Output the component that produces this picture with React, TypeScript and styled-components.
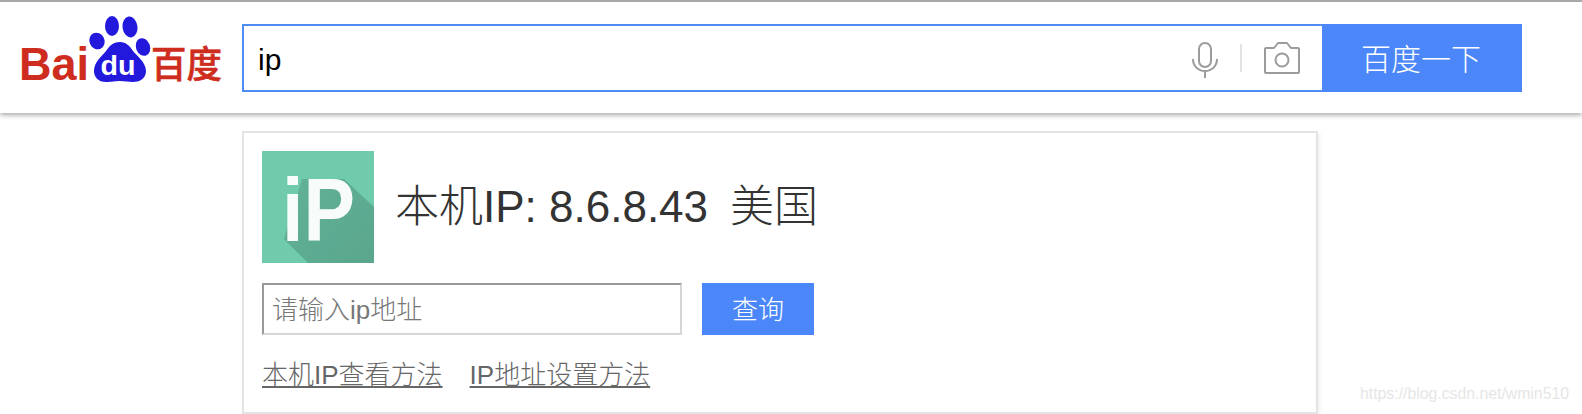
import React from "react";
import styled, { createGlobalStyle } from "styled-components";

const cjk = `"Liberation Sans", "Noto Sans CJK SC", sans-serif`;

const GlobalStyle = createGlobalStyle`
  html, body {
    margin: 0;
    height: 414px;
    overflow: hidden;
    background: #fff;
    font-family: ${cjk};
  }
`;

const Logo = () => (
  <LogoSvg viewBox="20 16 202 68">
    <text x="19" y="80" fontFamily="Liberation Sans" fontWeight="700" fontSize="46" fill="#cf2c20" textLength="70" lengthAdjust="spacingAndGlyphs">
      Bai
    </text>
    <g fill="#2319dc">
      <ellipse cx="97" cy="41" rx="7.5" ry="8.5" transform="rotate(-25 97 41)" />
      <ellipse cx="112" cy="26" rx="7" ry="10" />
      <ellipse cx="130" cy="27" rx="7.5" ry="10.5" transform="rotate(-8 130 27)" />
      <ellipse cx="143" cy="47" rx="7" ry="9" transform="rotate(-20 143 47)" />
      <path d="M120 42c6 0 10 4 13 9 3 4 13 11 13 20 0 8-7 11-13 11-5 0-8-1-13-1s-8 1-14 1c-8 0-12-5-12-11 0-9 8-15 12-20 4-6 8-9 14-9z" />
    </g>
    <text x="118" y="75" textAnchor="middle" fontFamily="Liberation Sans" fontWeight="700" fontSize="27" fill="#fff" textLength="35" lengthAdjust="spacingAndGlyphs">
      du
    </text>
    <text x="151" y="78" fontFamily="Noto Sans CJK SC" fontWeight="500" fontSize="37" fill="#cf2c20" stroke="#cf2c20" strokeWidth="0.6" textLength="71" lengthAdjust="spacingAndGlyphs">
      百度
    </text>
  </LogoSvg>
);

const MicIcon = () => (
  <MicSvg viewBox="0 0 26 36" fill="none" stroke="#9b9b9b" strokeWidth="2">
    <rect x="7" y="1" width="12" height="24" rx="6" />
    <path d="M1 17c0 7 5 12 12 12s12-5 12-12M13 29v7" />
  </MicSvg>
);

const CameraIcon = () => (
  <CameraSvg viewBox="0 0 36 32" fill="none" stroke="#9b9b9b" strokeWidth="2" strokeLinejoin="round">
    <path d="M2 6h8l4-5h9l4 5h7a1 1 0 0 1 1 1v23a1 1 0 0 1-1 1H2a1 1 0 0 1-1-1V7a1 1 0 0 1 1-1z" />
    <circle cx="18" cy="18" r="6.5" />
  </CameraSvg>
);

const IpIcon = () => (
  <IpSvg viewBox="0 0 112 112">
    <defs>
      <linearGradient id="ipShade" x1="0" y1="0" x2="1" y2="1">
        <stop offset="0" stopColor="#62b298" />
        <stop offset="1" stopColor="#59a68d" />
      </linearGradient>
    </defs>
    <rect width="112" height="112" fill="#6fcbac" />
    <polygon points="22,88 46,112 112,112 112,56 82,28 40,28" fill="url(#ipShade)" />
    <text x="20" y="90" fontFamily="Liberation Sans" fontWeight="700" fontSize="89" fill="#fff" fillOpacity="0.95" textLength="73" lengthAdjust="spacingAndGlyphs">
      iP
    </text>
  </IpSvg>
);

export default function App() {
  return (
    <>
      <GlobalStyle />
      <Header>
        <Logo />
        <SearchForm>
          <SearchBox>
            <SearchInput defaultValue="ip" />
            <MicIcon />
            <Divider />
            <CameraIcon />
          </SearchBox>
          <SearchButton type="button">百度一下</SearchButton>
        </SearchForm>
      </Header>
      <Card>
        <TitleRow>
          <IpIcon />
          <Title>
            本机IP: 8.6.8.43
            <Place>美国</Place>
          </Title>
        </TitleRow>
        <QueryRow>
          <QueryInput placeholder="请输入ip地址" />
          <QueryButton type="button">查询</QueryButton>
        </QueryRow>
        <Links>
          <LinkItem href="#">本机IP查看方法</LinkItem>
          <LinkItem href="#">IP地址设置方法</LinkItem>
        </Links>
      </Card>
      <Watermark>https://blog.csdn.net/wmin510</Watermark>
    </>
  );
}

const Header = styled.header`
  display: flex;
  align-items: flex-start;
  height: 113px;
  box-sizing: border-box;
  padding: 22px 0 0 20px;
  border-top: 2px solid #a8a8a8;
  background: #fff;
  box-shadow: 0 2px 5px rgba(0, 0, 0, 0.35);
`;

const LogoSvg = styled.svg`
  flex: none;
  width: 202px;
  height: 68px;
  margin: -8px 20px 0 0;
  overflow: visible;
`;

const SearchForm = styled.div`
  display: flex;
  width: 1280px;
  height: 68px;
`;

const SearchBox = styled.div`
  display: flex;
  align-items: center;
  width: 1080px;
  box-sizing: border-box;
  padding-right: 22px;
  border: 2px solid #4e8cf7;
  border-right: 0;
`;

const SearchInput = styled.input`
  flex: 1;
  min-width: 0;
  height: 100%;
  box-sizing: border-box;
  padding: 3px 14px 0;
  border: 0;
  outline: 0;
  font-family: ${cjk};
  font-size: 30px;
  color: #000;
`;

const MicSvg = styled.svg`
  width: 26px;
  height: 36px;
  margin-top: 4px;
`;

const Divider = styled.span`
  width: 2px;
  height: 28px;
  margin: 0 22px;
  background: #e3e3e3;
`;

const CameraSvg = styled.svg`
  width: 36px;
  height: 32px;
`;

const SearchButton = styled.button`
  width: 200px;
  padding: 0 2px 3px 0;
  border: 0;
  background: #4b87f8;
  color: #fff;
  font-family: ${cjk};
  font-size: 30px;
  font-weight: 300;
`;

const Card = styled.section`
  width: 1076px;
  height: 283px;
  box-sizing: border-box;
  margin: 18px 0 0 242px;
  padding: 18px;
  border: 2px solid #e4e4e4;
  box-shadow: 2px 2px 4px rgba(0, 0, 0, 0.06);
`;

const TitleRow = styled.div`
  display: flex;
  align-items: center;
  gap: 21px;
`;

const IpSvg = styled.svg`
  flex: none;
  width: 112px;
  height: 112px;
`;

const Title = styled.h1`
  margin: 0;
  padding-bottom: 8px;
  font-size: 44px;
  font-weight: 300;
  color: #333;
`;

const Place = styled.span`
  margin-left: 22px;
`;

const QueryRow = styled.div`
  display: flex;
  gap: 20px;
  margin-top: 20px;
`;

const QueryInput = styled.input`
  width: 420px;
  height: 52px;
  box-sizing: border-box;
  padding: 2px 8px 0;
  border: 2px solid;
  border-color: #999 #d6d6d6 #d6d6d6 #999;
  outline: 0;
  font-family: ${cjk};
  font-size: 26px;

  &::placeholder {
    color: #777;
    font-weight: 300;
  }
`;

const QueryButton = styled.button`
  width: 112px;
  height: 52px;
  padding: 0 0 4px;
  border: 0;
  background: #4b87f8;
  color: #fff;
  font-family: ${cjk};
  font-size: 26px;
  font-weight: 300;
`;

const Links = styled.nav`
  display: flex;
  gap: 27px;
  margin-top: 19px;
`;

const LinkItem = styled.a`
  font-size: 26px;
  font-weight: 300;
  color: #666;
  text-decoration: underline;
`;

const Watermark = styled.div`
  position: absolute;
  left: 1360px;
  top: 385px;
  font-family: "Liberation Sans", sans-serif;
  font-size: 15.8px;
  color: #e6e6e6;
`;
